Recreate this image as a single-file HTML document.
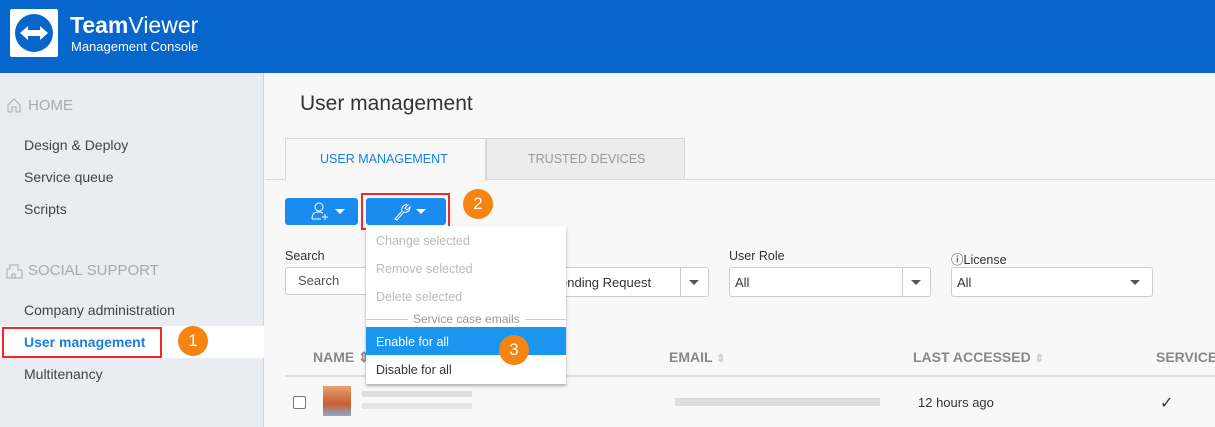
<!DOCTYPE html><html><head><style>
*{margin:0;padding:0;box-sizing:border-box}
body{width:1215px;height:427px;overflow:hidden;background:#f8f8f8;font-family:"Liberation Sans",sans-serif;position:relative;font-size:13px;color:#333}
.a{position:absolute;white-space:nowrap}
.hdr{left:0;top:0;width:1215px;height:73px;background:#0766cb}
.side{left:0;top:73px;width:264px;height:354px;background:#e9ecf0;border-right:1px solid #d0d3d8}
.nav{font-size:14px;color:#444;left:24px}
.sec{font-size:15px;color:#aaa;left:28px}
.badge{width:30px;height:30px;border-radius:50%;background:#f58410;color:#fff;font-size:17px;text-align:center;line-height:30px}
.lbl{font-size:12.5px;color:#333}
.inp{background:#fff;border:1px solid #ccc;border-radius:3px;height:30px}
.arr{width:0;height:0;border-left:5px solid transparent;border-right:5px solid transparent;border-top:5px solid #555}
.mi{left:376px;font-size:12.5px}
.th{font-size:14px;font-weight:bold;color:#888;top:349px}
</style></head><body>
<div class="a hdr"></div>
<div class="a" style="left:10px;top:9px;width:48px;height:48px;background:#fff;border-radius:2px"></div>
<svg class="a" style="left:12px;top:11px" width="44" height="44" viewBox="0 0 44 44"><circle cx="22" cy="22" r="19" fill="#0766cb"/><path d="M8 22 L16 15 V19 H28 V15 L36 22 L28 29 V25 H16 V29 Z" fill="#fff"/></svg>
<div class="a" style="left:70px;top:12px;color:#fff;font-size:23px"><b>Team</b>Viewer</div>
<div class="a" style="left:71px;top:39px;color:#fff;font-size:13px">Management Console</div>
<div class="a side"></div>
<svg class="a" style="left:6px;top:97px" width="16" height="16" viewBox="0 0 16 16"><path d="M2 8 L8 2 L14 8 V15 H10 V10 H6 V15 H2 Z" fill="none" stroke="#aaa"/></svg>
<div class="a sec" style="top:97px">HOME</div>
<div class="a nav" style="top:137px">Design &amp; Deploy</div>
<div class="a nav" style="top:169px">Service queue</div>
<div class="a nav" style="top:201px">Scripts</div>
<svg class="a" style="left:6px;top:262px" width="17" height="17" viewBox="0 0 17 17"><path d="M1 16 V7 H4 V3 H12 V8 H16 V16 Z M6 16 V12 H9 V16" fill="none" stroke="#aaa"/></svg>
<div class="a sec" style="top:262px">SOCIAL SUPPORT</div>
<div class="a nav" style="top:302px">Company administration</div>
<div class="a" style="left:0;top:326px;width:264px;height:32px;background:#fff"></div>
<div class="a" style="left:2px;top:327px;width:160px;height:31px;border:2px solid #ee2a2a"></div>
<div class="a nav" style="top:334px;color:#1a7fe0;font-weight:bold">User management</div>
<div class="a badge" style="left:178px;top:326px">1</div>
<div class="a nav" style="top:366px">Multitenancy</div>
<div class="a" style="left:300px;top:92px;font-size:21px;color:#333">User management</div>
<div class="a" style="left:265px;top:179px;width:950px;height:1px;background:#d8d8d8"></div>
<div class="a" style="left:285px;top:138px;width:201px;height:43px;background:#f8f8f8;border:1px solid #d8d8d8;border-bottom:none"></div>
<div class="a" style="left:320px;top:152px;font-size:12.5px;color:#1a7fe0">USER MANAGEMENT</div>
<div class="a" style="left:486px;top:138px;width:199px;height:41px;background:#ececec;border:1px solid #d8d8d8;border-bottom:none"></div>
<div class="a" style="left:528px;top:152px;font-size:12.5px;color:#999">TRUSTED DEVICES</div>
<div class="a" style="left:285px;top:198px;width:73px;height:27px;background:#1a8cf0;border-radius:3px"></div>
<svg class="a" style="left:310px;top:201px" width="20" height="20" viewBox="0 0 20 20"><circle cx="9" cy="6" r="4" fill="none" stroke="#fff"/><path d="M2 18 C2 12 5 11 9 11 C11 11 12 11.5 13 12 M2 18 H11 M15 13 V19 M12 16 H18" fill="none" stroke="#fff"/></svg>
<div class="a arr" style="left:335px;top:209px;border-top-color:#fff"></div>
<div class="a" style="left:366px;top:198px;width:80px;height:27px;background:#1a8cf0;border-radius:3px"></div>
<svg class="a" style="left:393px;top:201px" width="18" height="20" viewBox="0 0 18 20"><path d="M2 18 L9 10 C8 6 11 3 15 4 L12 7 L14 9 L17 6 C17 10 14 12 11 11 L4 19 Z" fill="none" stroke="#fff"/></svg>
<div class="a arr" style="left:416px;top:209px;border-top-color:#fff"></div>
<div class="a" style="left:361px;top:193px;width:89px;height:37px;border:2px solid #ee2a2a"></div>
<div class="a badge" style="left:463px;top:189px">2</div>
<div class="a lbl" style="left:285px;top:249px">Search</div>
<div class="a inp" style="left:285px;top:267px;width:90px;height:28px"></div>
<div class="a" style="left:298px;top:273px;font-size:13px;color:#555">Search</div>
<div class="a lbl" style="left:560px;top:249px">s</div>
<div class="a inp" style="left:540px;top:267px;width:169px"></div>
<div class="a" style="left:560px;top:275px;font-size:13px">ending Request</div>
<div class="a" style="left:680px;top:268px;width:1px;height:28px;background:#ccc"></div>
<div class="a arr" style="left:689px;top:280px"></div>
<div class="a lbl" style="left:729px;top:249px">User Role</div>
<div class="a inp" style="left:729px;top:267px;width:202px"></div>
<div class="a" style="left:735px;top:275px;font-size:13px">All</div>
<div class="a" style="left:902px;top:268px;width:1px;height:28px;background:#ccc"></div>
<div class="a arr" style="left:911px;top:280px"></div>
<div class="a lbl" style="left:951px;top:249px">ⓘLicense</div>
<div class="a inp" style="left:951px;top:267px;width:202px"></div>
<div class="a" style="left:957px;top:275px;font-size:13px">All</div>
<div class="a arr" style="left:1130px;top:280px"></div>
<div class="a" style="left:285px;top:375px;width:930px;height:2px;background:#ddd"></div>
<div class="a th" style="left:313px">NAME ⇕</div>
<div class="a th" style="left:669px">EMAIL <span style="color:#ccc;font-size:11px">⇕</span></div>
<div class="a th" style="left:913px">LAST ACCESSED <span style="color:#ccc;font-size:11px">⇕</span></div>
<div class="a th" style="left:1156px">SERVICE</div>
<div class="a" style="left:293px;top:396px;width:13px;height:13px;border:1px solid #777;border-radius:2px;background:#fff"></div>
<div class="a" style="left:323px;top:386px;width:28px;height:30px;background:linear-gradient(#e8a070,#c86030 60%,#8aa8d0)"></div>
<div class="a" style="left:362px;top:391px;width:110px;height:6px;background:#ddd"></div>
<div class="a" style="left:362px;top:403px;width:110px;height:6px;background:#e4e4e4"></div>
<div class="a" style="left:675px;top:398px;width:205px;height:8px;background:#ddd"></div>
<div class="a" style="left:918px;top:395px;font-size:13px">12 hours ago</div>
<div class="a" style="left:1160px;top:393px;font-size:16px">✓</div>
<div class="a" style="left:366px;top:226px;width:200px;height:158px;background:#fff;box-shadow:0 2px 3px rgba(0,0,0,.3)"></div>
<div class="a mi" style="top:234px;color:#bbb">Change selected</div>
<div class="a mi" style="top:262px;color:#bbb">Remove selected</div>
<div class="a mi" style="top:290px;color:#bbb">Delete selected</div>
<div class="a" style="left:366px;top:319px;width:200px;height:1px;background:#ccc"></div>
<div class="a" style="left:408px;top:312px;padding:0 5px;background:#fff;font-size:12px;color:#999">Service case emails</div>
<div class="a" style="left:366px;top:327px;width:200px;height:28px;background:#1a96f0"></div>
<div class="a mi" style="top:335px;color:#fff">Enable for all</div>
<div class="a mi" style="top:363px;color:#333">Disable for all</div>
<div class="a badge" style="left:499px;top:335px">3</div>
</body></html>
